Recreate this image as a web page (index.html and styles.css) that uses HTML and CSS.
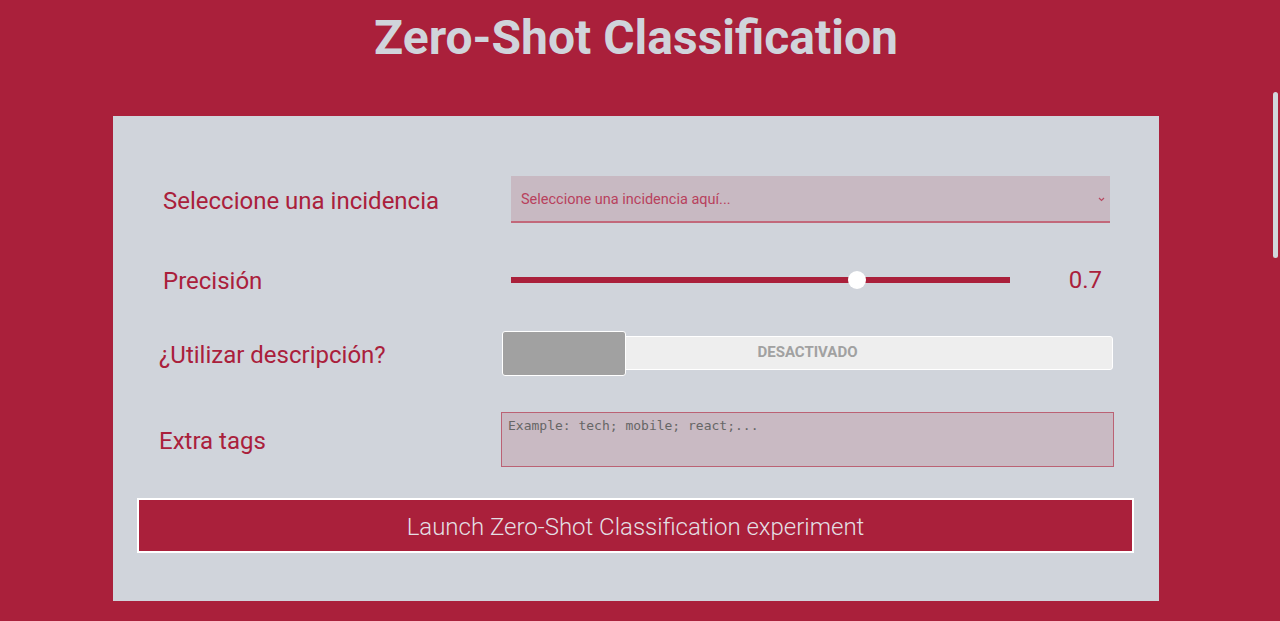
FILE: index.html
```html
<!DOCTYPE html>
<html lang="es">
<head>
<meta charset="utf-8">
<title>Zero-Shot Classification</title>
<link rel="stylesheet" href="styles.css">
</head>
<body>
<div class="page">
  <h1 class="title">Zero-Shot Classification</h1>
  <div class="card">
    <div class="row row-select">
      <label class="label">Seleccione una incidencia</label>
      <div class="select">
        <span class="select-text">Seleccione una incidencia aquí...</span>
        <svg class="chev" width="7" height="5" viewBox="0 0 7 5"><path d="M1 1 L3.5 3.5 L6 1" fill="none" stroke="#b84a62" stroke-width="1.2"/></svg>
      </div>
    </div>
    <div class="row row-slider">
      <label class="label">Precisión</label>
      <div class="slider">
        <div class="track"><span class="thumb"></span></div>
        <span class="value">0.7</span>
      </div>
    </div>
    <div class="row row-toggle">
      <label class="label label-shift">¿Utilizar descripción?</label>
      <div class="toggle">
        <span class="knob"></span>
        <span class="toggle-text">DESACTIVADO</span>
      </div>
    </div>
    <div class="row row-tags">
      <label class="label label-shift">Extra tags</label>
      <div class="textarea"><span class="placeholder">Example: tech; mobile; react;...</span></div>
    </div>
    <button class="launch">Launch Zero-Shot Classification experiment</button>
  </div>
</div>
<div class="scroll-thumb"></div>
</body>
</html>
```
FILE: styles.css
```css
html, body {
  margin: 0;
  padding: 0;
  height: 100%;
  overflow: hidden;
  background: #aa203b;
}
body {
  font-family: Roboto, "Liberation Sans", sans-serif;
}
.page {
  width: 1272px;
}
.title {
  margin: 0;
  padding-top: 10px;
  text-align: center;
  font-size: 48px;
  font-weight: 700;
  line-height: 56px;
  color: #d0d4db;
}
.card {
  width: 1046px;
  box-sizing: border-box;
  margin: 50px auto 0;
  background: #d0d4db;
  padding: 60px 49px 48px 49px;
  height: 485px;
}
.row {
  display: grid;
  grid-template-columns: 349px 599px;
  align-items: center;
}
.label {
  font-size: 24px;
  color: #aa203b;
  padding-left: 1px;
  padding-top: 2px;
}
.label-shift {
  margin-left: -4px;
}
.row-select {
  height: 47px;
}
.select {
  height: 47px;
  box-sizing: border-box;
  background: #c8b9c2;
  border-bottom: 2px solid #c2687a;
  display: flex;
  align-items: center;
  justify-content: space-between;
  padding: 0 5px 0 10px;
}
.select-text {
  font-size: 14.5px;
  color: #b8415d;
  padding-top: 1px;
}
.chev {
  display: block;
  margin-top: 2px;
}
.row-slider {
  height: 34px;
  margin-top: 40px;
}
.slider {
  display: flex;
  align-items: center;
}
.track {
  position: relative;
  width: 499px;
  height: 6px;
  background: #aa203b;
}
.thumb {
  position: absolute;
  left: 337px;
  top: -6px;
  width: 18px;
  height: 18px;
  border-radius: 50%;
  background: #ffffff;
}
.value {
  margin-left: auto;
  padding-right: 8px;
  font-size: 24px;
  color: #aa203b;
}
.row-toggle {
  height: 45px;
  margin-top: 34px;
}
.toggle {
  position: relative;
  margin-left: -9px;
  width: 611px;
  height: 34px;
  box-sizing: border-box;
  background: #eeeeee;
  border: 1px solid #ffffff;
  border-radius: 3px;
  display: flex;
  align-items: center;
  justify-content: center;
  margin-top: -1px;
}
.knob {
  position: absolute;
  left: -1px;
  top: -6px;
  width: 124px;
  height: 45px;
  box-sizing: border-box;
  background: #a1a1a1;
  border: 1px solid #ffffff;
  border-radius: 3px;
}
.toggle-text {
  font-size: 15px;
  font-weight: 700;
  color: #a1a1a1;
  margin-bottom: 2px;
}
.row-tags {
  height: 55px;
  margin-top: 36px;
}
.textarea {
  margin-left: -10px;
  width: 613px;
  height: 55px;
  box-sizing: border-box;
  background: #c9bac3;
  border: 1px solid #bb6274;
  padding: 2px 6px;
}
.placeholder {
  font-family: "DejaVu Sans Mono", "Liberation Mono", monospace;
  font-size: 13px;
  color: #666666;
}
.launch {
  display: block;
  margin: 31px -24px 0 -25px;
  width: calc(100% + 49px);
  height: 55px;
  box-sizing: border-box;
  background: #aa203b;
  border: 2px solid #ffffff;
  color: #e4dfe3;
  font-family: Roboto, "Liberation Sans", sans-serif;
  font-size: 24px;
  font-weight: 300;
  padding-top: 3px;
  cursor: pointer;
}
.scroll-thumb {
  position: fixed;
  right: 2px;
  top: 92px;
  width: 5px;
  height: 166px;
  border-radius: 3px;
  background: #d2d6dc;
}
```
